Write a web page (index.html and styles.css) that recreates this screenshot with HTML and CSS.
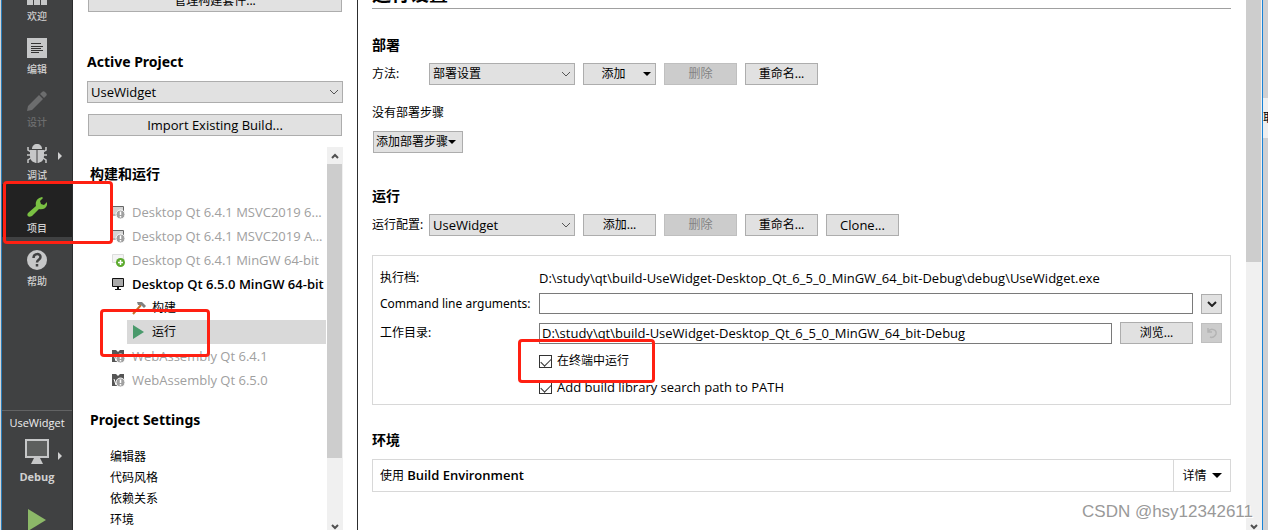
FILE: index.html
```html
<!DOCTYPE html>
<html lang="zh-CN">
<head>
  <meta charset="UTF-8">
  <meta name="viewport" content="width=device-width, initial-scale=1.0">
  <title>UseWidget - Qt Creator</title>
  <link rel="stylesheet" href="styles.css">
</head>
<body>
  <svg class="defs" width="0" height="0" aria-hidden="true">
    <symbol id="chevron" viewBox="0 0 10 6"><path d="M1 1l4 4 4-4" fill="none" stroke="currentColor"/></symbol>
    <symbol id="caret" viewBox="0 0 8 4"><path d="M0 0h8L4 4z" fill="currentColor"/></symbol>
    <symbol id="scroll-arrow" viewBox="0 0 8 6"><path d="M1 5l3-3 3 3" fill="none" stroke="#505050" stroke-width="2"/></symbol>
    <symbol id="kit-warning" viewBox="0 0 14 14">
      <path d="M0 2h11v7H0z" fill="#d4d4d4"/>
      <path d="M0 1.500h11.500V6M0 10h5" fill="none" stroke="#666"/>
      <circle cx="8.500" cy="9.500" r="4.500" fill="#a0a0a0" stroke="#fff"/>
      <path d="M8.500 6.500v3.500M8.500 11v1.500" stroke="#fff" stroke-width="1.500"/>
    </symbol>
    <symbol id="kit-wasm" viewBox="0 0 14 14">
      <path d="M0 1h4l2 2 2-2h4v12H0z" fill="#555"/>
      <path d="M2 6l2 6 2-5 2 5" fill="none" stroke="#fff"/>
      <circle cx="8.500" cy="9.500" r="4.500" fill="#a0a0a0" stroke="#fff"/>
      <path d="M8.500 6.500v3.500M8.500 11v1.500" stroke="#fff" stroke-width="1.500"/>
    </symbol>
  </svg>

  <div class="window">
    <nav class="modes">
      <div class="mode-list">
        <a class="mode" href="#">
          <svg width="20" height="20" viewBox="0 0 20 20"><path d="M0 0h20v4H0zM0 6h6v14H0zM7 6h6v14H7zM14 6h6v14h-6z" fill="#c6c7c8"/></svg>
          <span>欢迎</span>
        </a>
        <a class="mode" href="#">
          <svg width="20" height="20" viewBox="0 0 20 20"><path d="M0 0h20v20H0z" fill="#c6c7c8"/><path d="M4 5.500h10M4 8.500h12M4 10.500h10M4 12.500h12M4 14.500h8" stroke="#333"/></svg>
          <span>编辑</span>
        </a>
        <a class="mode disabled" href="#">
          <svg width="20" height="20" viewBox="0 0 20 20"><path d="M0 20l1-5L12 4l4 4L5 19zM13 3l2-2c1-1 2-1 3 0l1 1c1 1 1 2 0 3l-2 2z" fill="#6c6d6e"/></svg>
          <span>设计</span>
        </a>
        <a class="mode" href="#">
          <svg width="20" height="20" viewBox="0 0 20 20">
            <path d="M5 5C5 2 7 0 10 0s5 2 5 5z" fill="#c6c7c8"/>
            <path d="M3 6h14v6c0 5-4 7-7 7s-7-2-7-7z" fill="#c6c7c8"/>
            <path d="M4 8L1 6V3M4 11H0M4 14l-3 2v3M16 8l3-2V3M16 11h4M16 14l3 2v3" fill="none" stroke="#c6c7c8" stroke-width="1.500"/>
            <path d="M10 5v14M4 5.500h12" stroke="#404142"/>
          </svg>
          <span>调试</span>
          <svg class="mode-arrow" width="4" height="8" viewBox="0 0 4 8"><path d="M0 0l4 4-4 4z" fill="#d0d0d0"/></svg>
        </a>
        <a class="mode active" href="#">
          <svg width="20" height="20" viewBox="0 0 20 20"><path d="M1 16L9 9C8 5 10 1 15 0l1 1-3 3 1 3 3 1 3-3c1 5-3 8-8 7l-7 7c-3 2-6 0-4-3z" fill="#7ac143"/></svg>
          <span>项目</span>
        </a>
        <a class="mode" href="#">
          <svg width="20" height="20" viewBox="0 0 20 20"><circle cx="10" cy="10" r="10" fill="#c6c7c8"/><path d="M6.500 8c0-5 7-5 7-1 0 3-3.500 2.500-3.500 5.500M10 14v2.500" fill="none" stroke="#404142" stroke-width="2.500"/></svg>
          <span>帮助</span>
        </a>
      </div>
      <div class="target">
        <span class="target-project">UseWidget</span>
        <div class="target-kit">
          <svg width="24" height="26" viewBox="0 0 24 26"><path d="M1 1h22v17H1z" fill="#5d5f5e" stroke="#c6c7c8" stroke-width="2"/><path d="M9 19h6l3 6H6z" fill="#c6c7c8"/></svg>
          <svg class="mode-arrow" width="4" height="8" viewBox="0 0 4 8"><path d="M0 0l4 4-4 4z" fill="#d0d0d0"/></svg>
        </div>
        <strong>Debug</strong>
        <button class="run" aria-label="运行"><svg width="18" height="22" viewBox="0 0 18 22"><path d="M0 0l18 11L0 22z" fill="#8cb868"/></svg></button>
      </div>
    </nav>

    <aside class="projects">
      <button class="btn wide">管理构建套件...</button>
      <h2 class="active-title">Active Project</h2>
      <div class="select wide-select">
        <select class="latin" aria-label="Active Project"><option>UseWidget</option></select>
        <svg width="10" height="6"><use href="#chevron"/></svg>
      </div>
      <button class="btn wide latin">Import Existing Build...</button>

      <div class="tree-area">
        <div class="tree">
          <h2>构建和运行</h2>
          <ul class="kits latin">
            <li><a class="kit off" href="#"><svg width="14" height="14"><use href="#kit-warning"/></svg>Desktop Qt 6.4.1 MSVC2019 6...</a></li>
            <li><a class="kit off" href="#"><svg width="14" height="14"><use href="#kit-warning"/></svg>Desktop Qt 6.4.1 MSVC2019 A...</a></li>
            <li><a class="kit off" href="#"><svg width="14" height="14" viewBox="0 0 14 14"><path d="M.5 1.500h11v8H.5z" fill="#f4f4f4" stroke="#ddd"/><circle cx="8.500" cy="9.500" r="4.500" fill="#5caa2e"/><path d="M8.500 7v5M6 9.500h5" stroke="#fff" stroke-width="1.500"/></svg>Desktop Qt 6.4.1 MinGW 64-bit</a></li>
            <li><a class="kit current" href="#"><svg width="14" height="14" viewBox="0 0 14 14"><path d="M.5 1.500h11v8H.5z" fill="#aaa" stroke="#111"/><path d="M5 10h2v2h2v1H3v-1h2z" fill="#111"/></svg>Desktop Qt 6.5.0 MinGW 64-bit</a></li>
            <li><a class="step" href="#"><svg width="14" height="14" viewBox="0 0 14 14"><path d="M1 13l8-9" stroke="#c4702c" stroke-width="2"/><path d="M5 1h5l4 4-2 2-3-3-3 0z" fill="#808080"/></svg>构建</a></li>
            <li><a class="step selected" href="#"><svg width="14" height="14" viewBox="0 0 14 14"><path d="M1 0l11 7-11 7z" fill="#4a9a6c"/></svg>运行</a></li>
            <li><a class="kit off" href="#"><svg width="14" height="14"><use href="#kit-wasm"/></svg>WebAssembly Qt 6.4.1</a></li>
            <li><a class="kit off" href="#"><svg width="14" height="14"><use href="#kit-wasm"/></svg>WebAssembly Qt 6.5.0</a></li>
          </ul>
          <h2>Project Settings</h2>
          <ul class="settings">
            <li><a href="#">编辑器</a></li>
            <li><a href="#">代码风格</a></li>
            <li><a href="#">依赖关系</a></li>
            <li><a href="#">环境</a></li>
          </ul>
        </div>
        <div class="scrollbar">
          <svg width="8" height="6"><use href="#scroll-arrow"/></svg>
          <div class="thumb"></div>
          <svg class="down" width="8" height="6"><use href="#scroll-arrow"/></svg>
        </div>
      </div>
    </aside>

    <main class="content">
      <h1>运行设置</h1>

      <section>
        <h3>部署</h3>
        <div class="row">
          <label for="method">方法:</label>
          <div class="select">
            <select id="method"><option>部署设置</option></select>
            <svg width="10" height="6"><use href="#chevron"/></svg>
          </div>
          <button class="btn menu">添加<svg width="8" height="4"><use href="#caret"/></svg></button>
          <button class="btn" disabled>删除</button>
          <button class="btn">重命名...</button>
        </div>
        <p>没有部署步骤</p>
        <button class="btn add-step">添加部署步骤<svg width="8" height="4"><use href="#caret"/></svg></button>
      </section>

      <section class="run-section">
        <h3>运行</h3>
        <div class="row">
          <label for="config">运行配置:</label>
          <div class="select">
            <select id="config" class="latin"><option>UseWidget</option></select>
            <svg width="10" height="6"><use href="#chevron"/></svg>
          </div>
          <button class="btn">添加...</button>
          <button class="btn" disabled>删除</button>
          <button class="btn">重命名...</button>
          <button class="btn latin">Clone...</button>
        </div>

        <div class="panel">
          <div class="field executable">
            <span>执行档:</span>
            <span class="latin">D:\study\qt\build-UseWidget-Desktop_Qt_6_5_0_MinGW_64_bit-Debug\debug\UseWidget.exe</span>
          </div>
          <div class="field">
            <label for="args">Command line arguments:</label>
            <input class="text latin" id="args" type="text">
            <button class="btn square" aria-label="展开"><svg width="10" height="6"><path d="M1 1l4 4 4-4" fill="none" stroke="#222" stroke-width="2"/></svg></button>
          </div>
          <div class="field">
            <label for="workdir">工作目录:</label>
            <input class="text latin" id="workdir" type="text" value="D:\study\qt\build-UseWidget-Desktop_Qt_6_5_0_MinGW_64_bit-Debug">
            <button class="btn">浏览...</button>
            <button class="btn square" disabled aria-label="重置"><svg width="12" height="12" viewBox="0 0 12 12"><path d="M2 1v4h4M2 5c3-5 9-2 8 2-1 3-4 4-6 3" fill="none" stroke="#b4b4b4" stroke-width="1.500"/></svg></button>
          </div>
          <label class="check"><input type="checkbox" checked>在终端中运行</label>
          <label class="check latin"><input type="checkbox" checked>Add build library search path to PATH</label>
        </div>
      </section>

      <section class="env-section">
        <h3>环境</h3>
        <div class="env">
          <span class="env-name">使用 <strong class="latin">Build Environment</strong></span>
          <button class="details">详情<svg width="10" height="5"><use href="#caret"/></svg></button>
        </div>
      </section>
    </main>

    <div class="scrollbar main-scroll">
      <div class="thumb"></div>
      <svg class="down" width="8" height="6"><use href="#scroll-arrow"/></svg>
    </div>
    <div class="backdrop"><span>取</span></div>

    <div class="mark mark-projects"></div>
    <div class="mark mark-run"></div>
    <div class="mark mark-terminal"></div>
    <div class="watermark">CSDN @hsy12342611</div>
  </div>
</body>
</html>
```
FILE: styles.css
```css
* {
  box-sizing: border-box;
}

body {
  margin: 0;
  font: 12px/16px "Noto Sans", "Noto Sans CJK SC", sans-serif;
  color: #000;
  background: #fff;
}

h1, h2, h3, p, ul {
  margin: 0;
  padding: 0;
}

ul {
  list-style: none;
}

a {
  color: inherit;
  text-decoration: none;
}

button, input, select {
  font: inherit;
  color: inherit;
}

.defs {
  position: absolute;
}

.latin {
  font-family: "Open Sans", "Noto Sans CJK SC", sans-serif;
  font-size: 13px;
}

strong.latin {
  font-weight: 600;
}

.window {
  position: relative;
  display: flex;
  height: 100vh;
  overflow: hidden;
  border-left: 1px solid #d4d4d4;
}

/* mode bar */
.modes {
  display: flex;
  flex-direction: column;
  justify-content: space-between;
  flex: 0 0 72px;
  border-left: 1px solid #2b7cb8;
  border-right: 1px solid #2c2d2e;
  background: #404142;
  color: #d0d0d0;
}

.mode-list {
  margin-top: -28px;
}

.mode {
  position: relative;
  display: flex;
  flex-direction: column;
  align-items: center;
  gap: 3px;
  height: 53px;
  padding-top: 13px;
  font-size: 10px;
  font-weight: 500;
}

.mode.active {
  background: #222;
}

.mode.disabled {
  color: #6c6d6e;
}

.mode-arrow {
  position: absolute;
  right: 10px;
  top: 21px;
}

.target {
  display: flex;
  flex-direction: column;
  align-items: center;
  height: 120px;
  padding-top: 4px;
  border-top: 1px solid #626364;
  font-family: "Open Sans", sans-serif;
  font-size: 11px;
}

.target-project {
  color: #eee;
}

.target-kit {
  position: relative;
  width: 100%;
  padding: 8px 0 4px;
  text-align: center;
}

.target-kit svg {
  vertical-align: top;
}

.run {
  flex-shrink: 0;
  margin-top: 24px;
  padding: 0;
  border: 0;
  background: none;
}

/* common controls */
.btn {
  display: inline-flex;
  align-items: center;
  justify-content: center;
  flex-shrink: 0;
  width: 73px;
  height: 22px;
  padding: 0;
  border: 1px solid #adadad;
  background: #e1e1e1;
}

.btn:disabled {
  border-color: #bfbfbf;
  background: #ccc;
  color: #838383;
}

.btn.menu {
  gap: 17px;
  padding-left: 13px;
}

.btn.square {
  width: 21px;
  height: 20px;
}

.btn.wide {
  width: auto;
  margin: 0 1px;
}

.select {
  display: grid;
  align-items: center;
  width: 146px;
}

.select select {
  grid-area: 1 / 1;
  width: 100%;
  height: 22px;
  padding: 0 3px;
  border: 1px solid #adadad;
  border-radius: 0;
  background: #e1e1e1;
  appearance: none;
}

.select svg {
  grid-area: 1 / 1;
  justify-self: end;
  margin-right: 4px;
  color: #555;
  pointer-events: none;
}

.scrollbar {
  display: flex;
  flex-direction: column;
  align-items: center;
  flex: 0 0 16px;
  padding-top: 6px;
  background: #f0f0f0;
}

.scrollbar .thumb {
  align-self: stretch;
  height: 78%;
  margin: 5px 1px 0 0;
  background: #cdcdcd;
}

.scrollbar .down {
  margin-top: auto;
  transform: rotate(180deg);
}

/* project panel */
.projects {
  display: flex;
  flex-direction: column;
  flex: 0 0 285px;
  min-width: 0;
  margin-top: -10px;
  padding: 0 14px;
  border-right: 1px solid #2c2d2e;
}

h2 {
  font-size: 14px;
  line-height: 20px;
}

.projects .active-title {
  margin: 40px 0 9px;
}

.wide-select {
  width: 100%;
  margin-bottom: 11px;
}

.tree-area {
  display: flex;
  flex: 1;
  min-height: 0;
  margin-top: 11px;
}

.tree {
  flex: 1;
  min-width: 0;
  padding-top: 17px;
  overflow: hidden;
}

.tree h2 {
  padding-left: 3px;
}

.kits {
  margin: 16px 0 18px;
}

.kit, .step {
  display: flex;
  align-items: center;
  gap: 6px;
  height: 24px;
  margin-right: 1px;
  padding-left: 25px;
  white-space: nowrap;
}

.kit svg, .step svg {
  flex-shrink: 0;
}

.kit.off {
  color: #a0a0a0;
}

.kit.current {
  font-weight: 600;
}

.step {
  margin-left: 40px;
  padding-left: 5px;
  font-size: 12px;
}

.step.selected {
  background: #d9d9d9;
}

.settings {
  margin-top: 16px;
  padding-left: 23px;
  line-height: 21px;
}

/* run settings */
.content {
  flex: 1;
  min-width: 0;
  margin-top: -20px;
  padding: 0 15px 0 14px;
}

h1 {
  border-bottom: 1px solid #a0a0a0;
  font-size: 19px;
  line-height: 28px;
}

h3 {
  font-size: 14px;
  line-height: 20px;
}

.content section {
  padding-top: 26px;
}

.row {
  display: flex;
  align-items: center;
  gap: 8px;
  margin-top: 8px;
}

.row label {
  width: 49px;
  white-space: nowrap;
}

.content p {
  margin: 20px 0 10px;
}

.add-step {
  justify-content: flex-start;
  width: 90px;
  margin-left: 1px;
  padding-left: 2px;
}

.content .run-section {
  padding-top: 33px;
}

.panel {
  display: grid;
  gap: 8px;
  margin-top: 19px;
  padding: 15px 8px 8px 7px;
  border: 1px solid #d8d8d8;
}

.field {
  display: flex;
  align-items: center;
  gap: 8px;
}

.field > :first-child {
  flex: 0 0 151px;
  min-width: 0;
  white-space: nowrap;
}

.executable {
  height: 14px;
}

.text {
  flex: 1;
  min-width: 0;
  height: 21px;
  padding: 0 2px;
  border: 1px solid #7a7a7a;
  background: #fff;
}

.check {
  display: flex;
  align-items: center;
  gap: 5px;
  height: 18px;
  margin-left: 159px;
}

.check input {
  display: grid;
  width: 13px;
  height: 13px;
  margin: 0;
  border: 1px solid #333;
  background: #fff;
  appearance: none;
}

.check input:checked::after {
  content: '';
  width: 9px;
  height: 5px;
  margin: 2px 1px;
  border-left: 1px solid #333;
  border-bottom: 1px solid #333;
  transform: rotate(-45deg);
}

.content .env-section {
  padding-top: 25px;
}

.env {
  display: flex;
  margin-top: 9px;
  border: 1px solid #d8d8d8;
}

.env-name {
  flex: 1;
  padding: 7px;
}

.details {
  display: flex;
  align-items: center;
  justify-content: center;
  gap: 5px;
  width: 57px;
  padding: 0;
  border: 0;
  border-left: 1px solid #d8d8d8;
  background: #fff;
}

.main-scroll .thumb {
  height: 50%;
  margin-top: -6px;
}

.backdrop {
  flex: 0 0 6px;
  min-width: 0;
  padding-top: 98px;
  overflow: hidden;
  border-left: 1px solid #1883d7;
  background: #d0d0d2;
}

.backdrop span {
  display: block;
  height: 40px;
  background: #efefef;
  line-height: 40px;
}

/* highlights drawn over the window */
.mark {
  position: absolute;
  border: 3px solid #ff2012;
  border-radius: 4px;
  pointer-events: none;
}

.mark-projects {
  left: 2px;
  top: 181px;
  width: 110px;
  height: 63px;
}

.mark-run {
  left: 99px;
  top: 309px;
  width: 110px;
  height: 48px;
}

.mark-terminal {
  left: 517px;
  top: 339px;
  width: 137px;
  height: 44px;
}

.watermark {
  position: absolute;
  right: 15px;
  bottom: 8px;
  color: #999;
  font: 17px/20px "Liberation Sans", sans-serif;
  text-shadow: 1px 1px #fff;
}
```
